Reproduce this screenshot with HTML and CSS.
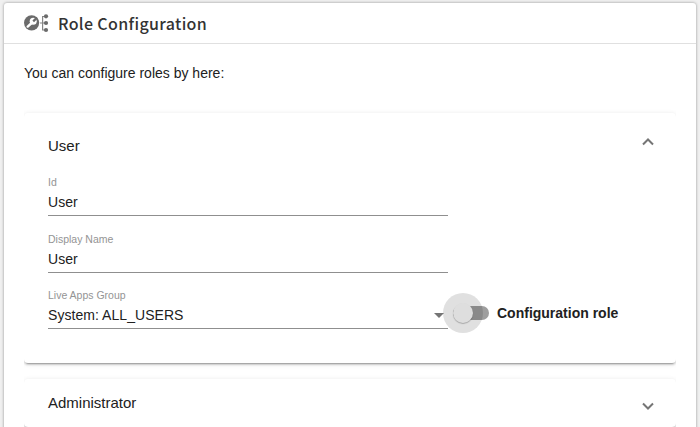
FILE: index.html
```html
<!DOCTYPE html>
<html lang="en">
<head>
<meta charset="utf-8">
<title>Role Configuration</title>
<link rel="stylesheet" href="styles.css">
</head>
<body>
<main class="card">
  <header class="card-header">
    <svg class="role-icon" width="25" height="19" viewBox="0 0 25 19">
      <circle cx="7.6" cy="8.8" r="7.6" fill="#6b6b6b"/>
      <path d="M3.7 12.6 8.2 8.5" stroke="#fff" stroke-width="2.4" stroke-linecap="round"/>
      <circle cx="9.2" cy="7.3" r="3.5" fill="#fff"/>
      <path d="M9.2 7.4 13 3.6" stroke="#6b6b6b" stroke-width="2.2"/>
      <path d="M16 9h6M22 2.5h-3.4V16H22" fill="none" stroke="#858585" stroke-width="1.2"/>
      <g fill="#6b6b6b"><circle cx="22" cy="2.3" r="2.1"/><circle cx="22" cy="9" r="2.1"/><circle cx="22" cy="16" r="2.1"/></g>
    </svg>
    <h1 class="title">Role Configuration</h1>
  </header>
  <section class="content">
    <p class="intro">You can configure roles by here:</p>
    <div class="accordion">
      <article class="panel panel-open">
        <div class="panel-header">
          <h2 class="panel-title">User</h2>
          <svg class="chevron" width="12" height="8" viewBox="0 0 12 8"><path d="M1 6.5 6 1.5l5 5"/></svg>
        </div>
        <div class="field"><label class="label">Id</label><div class="value">User</div></div>
        <div class="field field-second"><label class="label">Display Name</label><div class="value">User</div></div>
        <div class="group-row">
          <div class="field"><label class="label">Live Apps Group</label><div class="value select">System: ALL_USERS<span class="arrow"></span></div></div>
          <div class="toggle"><span class="track"><span class="ripple"></span><span class="thumb"></span></span><span class="toggle-label">Configuration role</span></div>
        </div>
      </article>
      <article class="panel panel-closed">
        <div class="panel-header">
          <h2 class="panel-title">Administrator</h2>
          <svg class="chevron" width="12" height="8" viewBox="0 0 12 8"><path d="M1 1.5l5 5 5-5"/></svg>
        </div>
      </article>
    </div>
  </section>
</main>
</body>
</html>
```
FILE: styles.css
```css
* { box-sizing: border-box; }
body {
  margin: 0;
  height: 427px;
  padding: 3px 4px 0;
  overflow: hidden;
  background: #f0f0f0;
  color: #212121;
  font-family: "Liberation Sans", Arial, sans-serif;
  font-size: 14px;
}
h1, h2, p { margin: 0; font-weight: 400; }
.card {
  height: 440px;
  background: #fff;
  border-radius: 3px;
  box-shadow: 0 0 3px rgba(0, 0, 0, .4);
}
.card-header {
  display: flex;
  align-items: center;
  height: 41px;
  padding-left: 20px;
  border-bottom: 1px solid #e0e0e0;
}
.role-icon { margin-right: 9px; }
.title {
  font: 500 16px/24px "Noto Sans CJK SC", sans-serif;
  letter-spacing: .35px;
  color: #333;
}
.content { padding: 20px 20px 0; }
.intro { line-height: 18px; }
.accordion {
  height: 325px;
  margin-top: 21px;
  padding-top: 10px;
  overflow: hidden;
}
.panel {
  padding: 0 24px;
  background: #fff;
  border-radius: 4px;
  box-shadow: 0 3px 1px -2px rgba(0, 0, 0, .2), 0 2px 2px rgba(0, 0, 0, .14), 0 1px 5px rgba(0, 0, 0, .12);
}
.panel-open { height: 250px; }
.panel-closed { height: 48px; margin-top: 16px; }
.panel-header {
  display: flex;
  align-items: center;
  justify-content: space-between;
  height: 64px;
}
.panel-closed .panel-header { height: 48px; }
.panel-title { font-size: 15px; line-height: 18px; }
.panel-open .panel-title { padding-top: 2px; }
.chevron { margin-right: -2px; fill: none; stroke: #757575; stroke-width: 2; }
.panel-open .chevron { margin-bottom: 6px; }
.panel-closed .chevron { margin-top: 6px; }
.field { width: 400px; height: 39px; border-bottom: 1px solid #8f8f8f; }
.field-second { margin: 18px 0 17px; }
.label { display: block; font-size: 10.5px; line-height: 10px; color: #949494; }
.value { margin-top: 6px; line-height: 18px; letter-spacing: .05px; }
.select { display: flex; align-items: center; justify-content: space-between; }
.arrow {
  margin-right: 4px;
  border: 5px solid transparent;
  border-top-color: #757575;
  border-bottom: 0;
}
.group-row { display: flex; align-items: center; }
.toggle { display: flex; align-items: center; margin-left: 5px; padding-top: 6px; }
.track {
  position: relative;
  width: 36px;
  height: 14px;
  margin-right: 8px;
  border-radius: 7px;
  background: #9e9e9e;
}
.ripple, .thumb { position: absolute; border-radius: 50%; }
.ripple { left: -10px; top: -13px; width: 40px; height: 40px; background: rgba(0, 0, 0, .12); }
.thumb {
  left: 0;
  top: -3px;
  width: 20px;
  height: 20px;
  background: #dedede;
  box-shadow: 0 1px 1px rgba(0, 0, 0, .25);
}
.toggle-label { font-weight: 700; line-height: 18px; }
```
